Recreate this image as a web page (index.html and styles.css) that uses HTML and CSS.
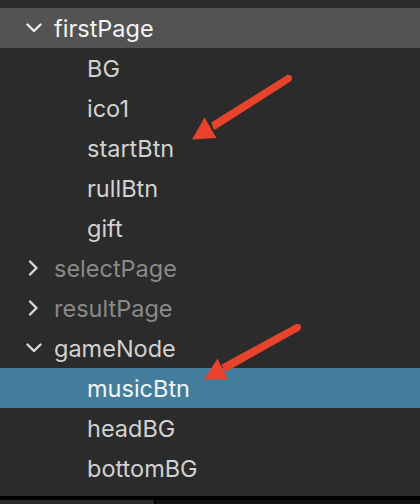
FILE: index.html
```html
<!DOCTYPE html>
<html>
<head>
<meta charset="utf-8">
<link rel="stylesheet" href="styles.css">
</head>
<body>
<div class="panel">
  <div class="tree">
    <div class="row parent focused"><span class="twisty"><svg width="16" height="10" viewBox="0 0 16 10"><path d="M1.5 1.5 L8 8 L14.5 1.5" fill="none" stroke="#ececec" stroke-width="2.4" stroke-linecap="round" stroke-linejoin="round"/></svg></span><span class="label bright">firstPage</span></div>
    <div class="row child"><span class="label">BG</span></div>
    <div class="row child"><span class="label">ico1</span></div>
    <div class="row child"><span class="label">startBtn</span></div>
    <div class="row child"><span class="label">rullBtn</span></div>
    <div class="row child"><span class="label">gift</span></div>
    <div class="row parent"><span class="twisty"><svg width="16" height="16" viewBox="0 0 16 16"><path d="M4 1.5 L10.5 8 L4 14.5" fill="none" stroke="#d8d8d8" stroke-width="2.4" stroke-linecap="round" stroke-linejoin="round"/></svg></span><span class="label dim">selectPage</span></div>
    <div class="row parent"><span class="twisty"><svg width="16" height="16" viewBox="0 0 16 16"><path d="M4 1.5 L10.5 8 L4 14.5" fill="none" stroke="#d8d8d8" stroke-width="2.4" stroke-linecap="round" stroke-linejoin="round"/></svg></span><span class="label dim">resultPage</span></div>
    <div class="row parent"><span class="twisty"><svg width="16" height="10" viewBox="0 0 16 10"><path d="M1.5 1.5 L8 8 L14.5 1.5" fill="none" stroke="#d8d8d8" stroke-width="2.4" stroke-linecap="round" stroke-linejoin="round"/></svg></span><span class="label">gameNode</span></div>
    <div class="row child selected"><span class="label bright">musicBtn</span></div>
    <div class="row child"><span class="label">headBG</span></div>
    <div class="row child"><span class="label">bottomBG</span></div>
  </div>
  <svg class="arrows" width="420" height="504" viewBox="0 0 420 504">
    <path d="M288 75.5 L212 123 L214.5 129 L290.5 80.5 Z" fill="#e8432d" stroke="#e8432d" stroke-width="1.5" stroke-linejoin="round"/>
    <circle cx="289" cy="78" r="3" fill="#e8432d"/>
    <polygon points="192,139.5 204.5,117.5 216.5,138" fill="#e8432d"/>
    <path d="M297 324.5 L222.5 365 L225.5 371 L299.5 329.5 Z" fill="#e8432d" stroke="#e8432d" stroke-width="1.5" stroke-linejoin="round"/>
    <circle cx="298" cy="327" r="3" fill="#e8432d"/>
    <polygon points="204,379.5 217.5,358.5 228,379.5" fill="#e8432d"/>
  </svg>
</div>
<div class="footer">
  <div class="foot-left"></div>
  <div class="foot-right"></div>
</div>
</body>
</html>
```
FILE: styles.css
```css
html, body {
  margin: 0;
  padding: 0;
  width: 420px;
  height: 504px;
  overflow: hidden;
  background: #2b2b2b;
  font-family: Inter, "Open Sans", "Liberation Sans", sans-serif;
}

.panel {
  position: relative;
  height: 496px;
  background: #2b2b2b;
}

.tree {
  padding-top: 8px;
  display: flex;
  flex-direction: column;
}

.row {
  height: 40px;
  display: flex;
  align-items: center;
  font-size: 23.5px;
  color: #d2d2d2;
  white-space: nowrap;
}

.row.parent {
  padding-left: 26px;
}

.row.child {
  padding-left: 87px;
}

.twisty {
  width: 28px;
  height: 40px;
  display: flex;
  align-items: center;
  justify-content: flex-start;
}

.twisty svg {
  display: block;
}

.focused {
  background: #535353;
}

.selected {
  background: #427e9b;
}

.label.bright {
  color: #f4f4f4;
}

.label.dim {
  color: #8a8a8a;
}

.arrows {
  position: absolute;
  left: 0;
  top: 0;
  pointer-events: none;
}

.footer {
  height: 8px;
  background: #000;
  display: flex;
  flex-direction: row;
  align-items: flex-end;
}

.foot-left {
  width: 154px;
  height: 4px;
  background: #2b2b2b;
}

.foot-right {
  flex: 1;
  height: 4px;
  margin-left: 2px;
  background: #111;
}
```
